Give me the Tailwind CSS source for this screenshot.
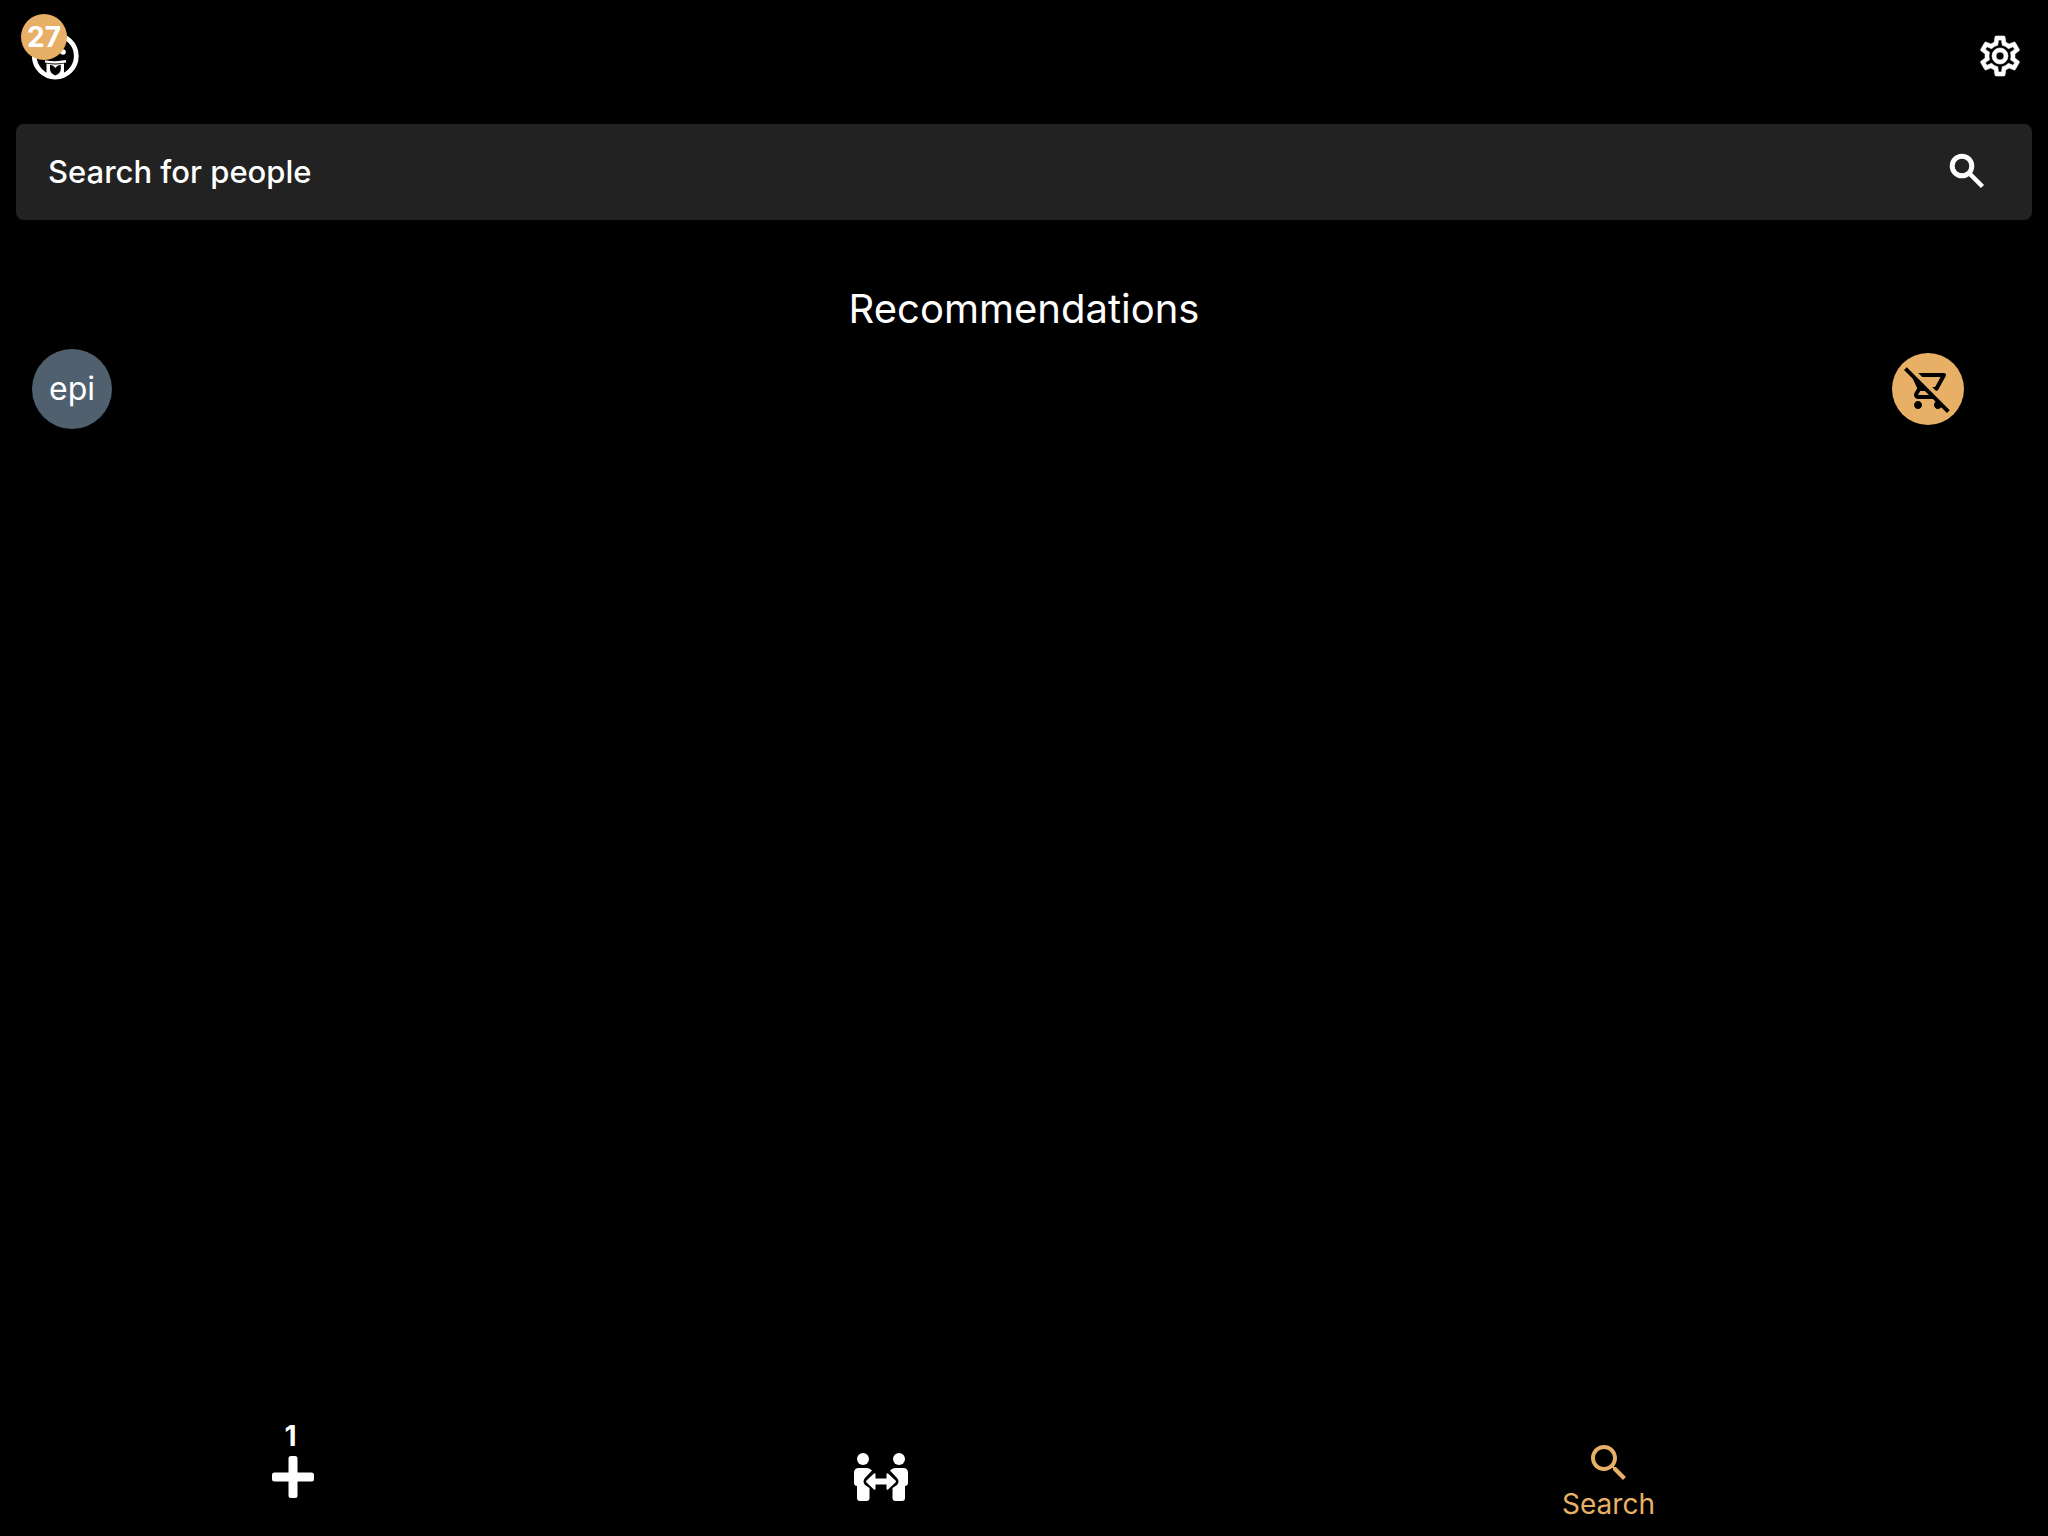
<!DOCTYPE html>
<html lang="en">
<head>
<meta charset="utf-8">
<meta name="viewport" content="width=device-width, initial-scale=1">
<title>Search for people</title>
<script src="https://cdn.jsdelivr.net/npm/@tailwindcss/browser@4"></script>
</head>
<body class="flex min-h-screen flex-col bg-black font-['Inter',sans-serif] text-white">
  <header class="flex h-28 items-center justify-between px-6">
    <button type="button" aria-label="Notifications, 27 new" class="relative flex size-16 items-center justify-center">
      <svg class="size-12" viewBox="0 0 48 48" fill="none" stroke="#fff" aria-hidden="true">
        <circle cx="23.300" cy="24" r="21" stroke-width="4.800"/>
        <circle cx="31" cy="20" r="2.800" fill="#fff" stroke="none"/>
        <circle cx="15.600" cy="20" r="2.800" fill="#fff" stroke="none"/>
        <path d="M13 29.300Q23.300 31.500 34 29.300" stroke-width="2.400"/>
        <path d="M14.500 31.500Q23.300 33.500 32 31.500V44.500Q23.300 48 14.500 44.500Z" fill="#fff" stroke="none"/>
        <path d="M18 33Q21 32.500 23.300 36Q25.600 32.500 28.800 33V37Q28.800 41 23.300 43.500Q18 41 18 37Z" fill="#000" stroke="none"/>
      </svg>
      <span class="absolute -left-[3px] -top-2.5 flex size-[46px] items-center justify-center rounded-full bg-[#e8b067] text-[28px] leading-none font-bold">27</span>
    </button>
    <button type="button" aria-label="Settings">
      <svg class="size-12" viewBox="0 0 24 24" fill="currentColor" stroke="currentColor" stroke-width="0.300" aria-hidden="true"><path d="M12,8A4,4 0 0,1 16,12A4,4 0 0,1 12,16A4,4 0 0,1 8,12A4,4 0 0,1 12,8M12,10A2,2 0 0,0 10,12A2,2 0 0,0 12,14A2,2 0 0,0 14,12A2,2 0 0,0 12,10M10,22C9.75,22 9.54,21.82 9.5,21.58L9.13,18.93C8.5,18.68 7.96,18.34 7.44,17.94L4.95,18.95C4.73,19.03 4.46,18.95 4.34,18.73L2.34,15.27C2.21,15.05 2.27,14.78 2.46,14.63L4.57,12.97L4.5,12L4.57,11L2.46,9.37C2.27,9.22 2.21,8.95 2.34,8.73L4.34,5.27C4.46,5.05 4.73,4.96 4.95,5.05L7.44,6.05C7.96,5.66 8.5,5.32 9.13,5.07L9.5,2.42C9.54,2.18 9.75,2 10,2H14C14.25,2 14.46,2.18 14.5,2.42L14.87,5.07C15.5,5.32 16.04,5.66 16.56,6.05L19.05,5.05C19.27,4.96 19.54,5.05 19.66,5.27L21.66,8.73C21.79,8.95 21.73,9.22 21.54,9.37L19.43,11L19.5,12L19.43,13L21.54,14.63C21.73,14.78 21.79,15.05 21.66,15.27L19.66,18.73C19.54,18.95 19.27,19.04 19.05,18.95L16.56,17.95C16.04,18.34 15.5,18.68 14.87,18.93L14.5,21.58C14.46,21.82 14.25,22 14,22H10M11.25,4L10.88,6.61C9.68,6.86 8.62,7.5 7.85,8.39L5.44,7.35L4.69,8.65L6.8,10.2C6.4,11.37 6.4,12.64 6.8,13.8L4.68,15.36L5.43,16.66L7.86,15.62C8.63,16.5 9.68,17.14 10.87,17.38L11.24,20H12.76L13.13,17.39C14.32,17.14 15.37,16.5 16.14,15.62L18.57,16.66L19.32,15.36L17.2,13.81C17.6,12.64 17.6,11.37 17.2,10.2L19.31,8.65L18.56,7.35L16.15,8.39C15.38,7.5 14.32,6.86 13.12,6.62L12.75,4H11.25Z"/></svg>
    </button>
  </header>

  <main class="flex flex-1 flex-col px-4 pt-3">
    <form role="search" class="flex h-24 rounded-lg bg-[#222222]" onsubmit="return false">
      <input type="text" aria-label="Search for people" placeholder="Search for people" class="min-w-0 flex-1 bg-transparent px-8 text-[31px] font-medium text-white outline-none placeholder:text-white">
      <button type="submit" aria-label="Search" class="flex w-28 items-center pl-6">
        <svg class="size-12" viewBox="0 0 48 48" fill="none" stroke="currentColor" stroke-width="5" aria-hidden="true"><circle cx="18" cy="18" r="9.800"/><path d="M24.500 24.500L38.500 38.500" stroke-width="4.500"/></svg>
      </button>
    </form>

    <h1 class="mt-16 text-center text-[40px] leading-[50px]">Recommendations</h1>
    <ul class="mt-[15px]">
      <li class="flex items-center justify-between pr-[68px] pl-4">
        <span class="flex size-20 items-center justify-center rounded-full bg-[#50606f] text-[32px]">epi</span>
        <button type="button" aria-label="Remove epi" class="flex size-[72px] items-center justify-center rounded-full bg-[#e8b067] text-black">
          <svg class="size-12" viewBox="0 0 24 24" fill="currentColor" aria-hidden="true"><path d="M1.410 1.130L0 2.540l4.390 4.390 2.210 4.660-1.350 2.450c-.16.28-.25.61-.25.96 0 1.100.9 2 2 2h7.460l1.380 1.380c-.5.36-.83.95-.83 1.620 0 1.100.89 2 1.990 2 .67 0 1.260-.33 1.620-.84L21.460 24l1.410-1.410L1.410 1.130zM7 15l1.100-2h2.360l2 2H7zM20 4H7.120l2 2h9.190l-2.760 5h-1.440l1.940 1.940c.54-.14.99-.49 1.250-.97l3.580-6.490C21.250 4.820 20.760 4 20 4zM7 18c-1.100 0-1.990.9-1.990 2S5.900 22 7 22s2-.9 2-2-.9-2-2-2z"/></svg>
        </button>
      </li>
    </ul>
  </main>

  <nav aria-label="Main" class="grid h-[118px] grid-cols-[585fr_591fr_865fr] pr-[7px]">
    <a href="#add" aria-label="Add, 1 pending" class="relative flex items-center justify-center">
      <svg class="size-12" viewBox="0 0 48 48" fill="currentColor" aria-hidden="true"><path d="M22 3h4q2.500 0 2.500 2.500v14h14q2.500 0 2.500 2.500v4q0 2.500-2.500 2.500h-14v14q0 2.500-2.500 2.500h-4q-2.500 0-2.500-2.500v-14h-14q-2.500 0-2.500-2.500v-4q0-2.500 2.500-2.500h14v-14q0-2.500 2.500-2.500z"/></svg>
      <span class="absolute inset-x-0 top-0 pr-1 text-center text-[28px] leading-[36px] font-bold">1</span>
    </a>
    <a href="#meet" aria-label="Distance" class="flex items-center justify-center">
      <svg class="h-12 w-[54px]" viewBox="0 0 54 48" fill="currentColor" aria-hidden="true">
        <circle cx="9" cy="6" r="6"/><circle cx="45" cy="6" r="6"/>
        <path id="person" d="M5 15h8q3 0 5 2.500l-7 7.500q-3 3.500 0 7l4.500 3V45q0 3-3 3h-6.500q-3 0-3-3V33Q0 32.500 0 30V20q0-5 5-5z"/>
        <use href="#person" transform="matrix(-1 0 0 1 54 0)"/>
        <path d="M21.500 21.500v4h11v-4q0-2 1.800-.7l7.200 6.700q1 1 0 2l-7.200 6.700q-1.800 1.300-1.800-.7v-4h-11v4q0 2-1.800.7l-7.200-6.700q-1-1 0-2l7.200-6.700q1.800-1.300 1.800.7z"/>
      </svg>
    </a>
    <a href="#search" aria-current="page" class="flex flex-col items-center pt-[21px] text-[#e8b067]">
      <svg class="size-12" viewBox="0 0 24 24" fill="currentColor" aria-hidden="true"><path d="M15.500 14h-.79l-.28-.27C15.410 12.590 16 11.110 16 9.500 16 5.910 13.090 3 9.500 3S3 5.910 3 9.500 5.910 16 9.500 16c1.610 0 3.090-.59 4.230-1.570l.27.28v.79l5 4.990L20.490 19l-4.990-5zm-6 0C7.010 14 5 11.990 5 9.500S7.010 5 9.500 5 14 7.010 14 9.500 11.990 14 9.500 14z"/></svg>
      <span class="text-[28px] leading-[34px]">Search</span>
    </a>
  </nav>
</body>
</html>
